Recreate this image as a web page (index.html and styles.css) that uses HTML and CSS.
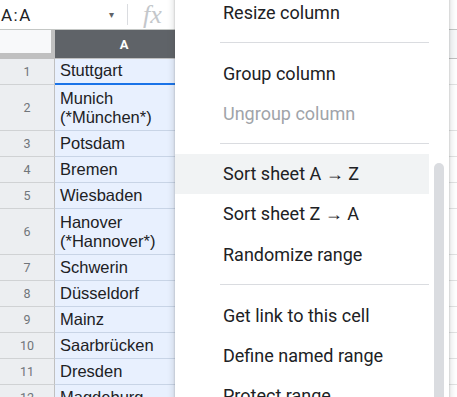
FILE: index.html
```html
<!DOCTYPE html>
<html lang="en">
<head>
    <meta charset="UTF-8">
    <title>Sheet column menu</title>
    <link rel="stylesheet" href="styles.css">
</head>
<body>
    <div class="page">
        <!-- Formula bar -->
        <div class="topbar">
            <div class="namebox">A:A</div>
            <div class="namebox-arrow">&#9662;</div>
            <div class="divider"></div>
            <div class="fx">fx</div>
        </div>

        <!-- Grid -->
        <div class="grid">
            <div class="corner"></div>
            <div class="colhead selected">A</div>
            <div class="colhead"></div>

            <div class="rh">1</div><div class="ca active">Stuttgart</div><div class="cb"></div>
            <div class="rh tall">2</div><div class="ca tall">Munich<br>(*München*)</div><div class="cb tall"></div>
            <div class="rh">3</div><div class="ca">Potsdam</div><div class="cb"></div>
            <div class="rh">4</div><div class="ca">Bremen</div><div class="cb"></div>
            <div class="rh">5</div><div class="ca">Wiesbaden</div><div class="cb"></div>
            <div class="rh tall">6</div><div class="ca tall">Hanover<br>(*Hannover*)</div><div class="cb tall"></div>
            <div class="rh">7</div><div class="ca">Schwerin</div><div class="cb"></div>
            <div class="rh">8</div><div class="ca">Düsseldorf</div><div class="cb"></div>
            <div class="rh">9</div><div class="ca">Mainz</div><div class="cb"></div>
            <div class="rh">10</div><div class="ca">Saarbrücken</div><div class="cb"></div>
            <div class="rh">11</div><div class="ca">Dresden</div><div class="cb"></div>
            <div class="rh">12</div><div class="ca">Magdeburg</div><div class="cb"></div>
        </div>

        <!-- Context menu -->
        <div class="menu">
            <div class="item">Resize column</div>
            <div class="sep"></div>
            <div class="item">Group column</div>
            <div class="item disabled">Ungroup column</div>
            <div class="sep"></div>
            <div class="item hover">Sort sheet A &rarr; Z</div>
            <div class="item">Sort sheet Z &rarr; A</div>
            <div class="item">Randomize range</div>
            <div class="sep"></div>
            <div class="item">Get link to this cell</div>
            <div class="item">Define named range</div>
            <div class="item">Protect range</div>
            <div class="thumb"></div>
        </div>
    </div>
</body>
</html>
```

FILE: styles.css
```css
* {
    margin: 0;
    padding: 0;
    box-sizing: border-box;
}

body {
    font-family: Roboto, "Liberation Sans", Arial, sans-serif;
    background: white;
}

.page {
    position: relative;
    width: 457px;
    height: 397px;
    overflow: hidden;
}

.topbar {
    display: flex;
    align-items: center;
    height: 30px;
    border-bottom: 1px solid #c4c7c5;
    background: white;
}

.namebox {
    width: 109px;
    padding-left: 1px;
    font-size: 17px;
    letter-spacing: 1.5px;
    color: #202124;
}

.namebox-arrow {
    width: 18px;
    font-size: 10px;
    color: #5f6368;
}

.divider {
    width: 1px;
    height: 21px;
    background: #dadce0;
}

.fx {
    margin-left: 15px;
    font-family: "Liberation Serif", serif;
    font-style: italic;
    font-size: 26px;
    color: #c4c7cb;
    line-height: 1;
}

.grid {
    display: grid;
    grid-template-columns: 55px 138px 1fr;
}

.corner {
    height: 29px;
    background: #f8f9fa;
    border-right: 4px solid #c0c0c0;
    border-bottom: 6px solid #c0c0c0;
}

.colhead {
    display: flex;
    align-items: center;
    justify-content: center;
    background: #f8f9fa;
    border-bottom: 1px solid #c0c0c0;
    font-size: 13px;
    font-weight: bold;
}

.colhead.selected {
    background: #5f6368;
    color: white;
}

.rh,
.ca,
.cb {
    height: 26px;
}

.rh {
    display: flex;
    align-items: center;
    justify-content: center;
    background: #eceef1;
    border-right: 1px solid #c0c0c0;
    border-bottom: 1px solid #d0d2d4;
    font-size: 12.5px;
    color: #70757a;
}

.ca {
    display: flex;
    align-items: flex-end;
    padding: 0 0 3px 5px;
    background: #e8f0fe;
    border-bottom: 1px solid #c8d4e6;
    font-family: "Liberation Sans", Arial, sans-serif;
    font-size: 16.5px;
    line-height: 19px;
    color: #202124;
}

.ca.active {
    border-bottom: 2px solid #1a73e8;
}

.cb {
    background: white;
    border-bottom: 1px solid #e2e3e3;
}

.grid .tall {
    height: 46px;
}

.menu {
    position: absolute;
    left: 175px;
    top: -8px;
    width: 274px;
    height: 430px;
    background: white;
    box-shadow: 0 2px 6px 2px rgba(60, 64, 67, 0.15), 0 1px 2px rgba(60, 64, 67, 0.3);
}

.item {
    display: flex;
    align-items: center;
    height: 40px;
    margin-right: 20px;
    padding-left: 48px;
    font-size: 18px;
    color: #202124;
}

.item.hover {
    background: #f1f3f4;
}

.item.disabled {
    color: #a0a4a9;
}

.sep {
    height: 1px;
    margin: 10px 20px 10px 45px;
    background: #dadce0;
}

.thumb {
    position: absolute;
    right: 5px;
    top: 171px;
    width: 10px;
    height: 300px;
    border-radius: 5px;
    background: #dadce0;
}
```
